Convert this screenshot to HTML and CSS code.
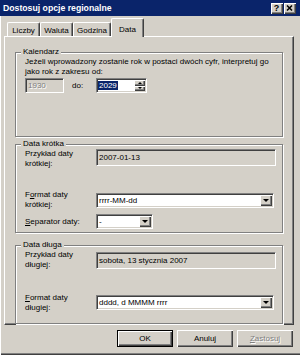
FILE: index.html
```html
<!DOCTYPE html>
<html lang="pl">
<head>
    <meta charset="UTF-8">
    <meta name="viewport" content="width=device-width, initial-scale=1.0">
    <title>Dostosuj opcje regionalne</title>
    <link rel="stylesheet" href="styles.css">
</head>
<body>
    <div class="dialog">
        <div class="titlebar">
            <span class="title">Dostosuj opcje regionalne</span>
            <div class="caption-buttons">
                <span class="cap-btn help">?</span>
                <span class="cap-btn close">
                    <svg width="7" height="6" viewBox="0 0 7 6"><path d="M1 0.5L6 5.5M6 0.5L1 5.5" stroke="#000" stroke-width="1.5"/></svg>
                </span>
            </div>
        </div>

        <div class="tabs">
            <div class="tab">Liczby</div>
            <div class="tab">Waluta</div>
            <div class="tab">Godzina</div>
            <div class="tab active">Data</div>
        </div>

        <div class="panel">
            <fieldset class="group calendar">
                <legend>Kalendarz</legend>
                <p class="hint">Jeżeli wprowadzony zostanie rok w postaci dwóch cyfr, interpretuj go<br>jako rok z zakresu od:</p>
                <div class="range">
                    <span class="edit year disabled">1930</span>
                    <span class="range-label">do:</span>
                    <div class="edit spin">
                        <span class="spin-value"><span class="selected">2029</span></span>
                        <span class="spin-buttons">
                            <span class="spin-btn"><i class="arrow-up"></i></span>
                            <span class="spin-btn"><i class="arrow-down"></i></span>
                        </span>
                    </div>
                </div>
            </fieldset>

            <fieldset class="group short-date">
                <legend>Data krótka</legend>
                <div class="row sample-row">
                    <span class="row-label">Przykład daty<br>krótkiej:</span>
                    <span class="edit sample">2007-01-13</span>
                </div>
                <div class="row format-row">
                    <span class="row-label">F<u>o</u>rmat daty<br>krótkiej:</span>
                    <div class="edit combo">
                        <span class="combo-value">rrrr-MM-dd</span>
                        <span class="combo-btn"><i class="arrow-down"></i></span>
                    </div>
                </div>
                <div class="row separator-row">
                    <span class="row-label"><u>S</u>eparator daty:</span>
                    <div class="edit combo small">
                        <span class="combo-value">-</span>
                        <span class="combo-btn"><i class="arrow-down"></i></span>
                    </div>
                </div>
            </fieldset>

            <fieldset class="group long-date">
                <legend>Data długa</legend>
                <div class="row sample-row">
                    <span class="row-label">Przykład daty<br>długiej:</span>
                    <span class="edit sample">sobota, 13 stycznia 2007</span>
                </div>
                <div class="row format-row">
                    <span class="row-label"><u>F</u>ormat daty<br>długiej:</span>
                    <div class="edit combo">
                        <span class="combo-value">dddd, d MMMM rrrr</span>
                        <span class="combo-btn"><i class="arrow-down"></i></span>
                    </div>
                </div>
            </fieldset>
        </div>

        <div class="buttons">
            <button type="button" class="default">OK</button>
            <button type="button">Anuluj</button>
            <button type="button" disabled><u>Z</u>astosuj</button>
        </div>
    </div>
</body>
</html>
```

FILE: styles.css
```css
* {
    box-sizing: border-box;
}

body {
    margin: 0;
    font-family: "Liberation Sans", Arial, sans-serif;
    font-size: 8px;
    line-height: 10px;
    color: #000;
    background: #d4d0c8;
}

.dialog {
    width: 300px;
    height: 355px;
    background: #d4d0c8;
    box-shadow: inset 1px 0 #fff, inset 0 -1px #404040, inset 0 -2px #808080;
    overflow: hidden;
}

/* title bar */
.titlebar {
    height: 16px;
    background: #0a246a;
    display: flex;
    align-items: center;
    justify-content: space-between;
    padding: 0 4px 0 3px;
}

.title {
    color: #fff;
    font-weight: bold;
    font-size: 8.7px;
}

.caption-buttons {
    display: flex;
    gap: 1px;
}

.cap-btn {
    width: 12px;
    height: 11px;
    background: #d4d0c8;
    box-shadow: inset 1px 1px #fff, inset -1px -1px #404040, inset -2px -2px #808080;
    display: flex;
    align-items: center;
    justify-content: center;
    font-weight: bold;
    font-size: 9px;
    line-height: 1;
    padding-right: 1px;
}

/* tabs */
.tabs {
    display: flex;
    align-items: flex-end;
    height: 19px;
    margin-top: 2px;
    padding-left: 7px;
    position: relative;
    z-index: 1;
}

.tab {
    width: 33px;
    height: 14px;
    margin-bottom: 1px;
    padding-top: 3px;
    text-align: center;
    border-top: 1px solid #fff;
    border-left: 1px solid #fff;
    border-right: 1px solid #404040;
    box-shadow: inset -1px 0 #808080;
    border-radius: 2px 2px 0 0;
    background: #d4d0c8;
}

.tab:nth-child(3) {
    width: 38px;
}

.tab.active {
    height: 19px;
    margin-bottom: 0;
    padding-top: 6px;
}

.panel {
    margin: -1px 0 0 4px;
    width: 290px;
    height: 289px;
    padding: 0 10px;
    border-top: 1px solid #fff;
    border-left: 1px solid #fff;
    border-right: 1px solid #404040;
    border-bottom: 1px solid #404040;
    box-shadow: inset -1px -1px #808080;
}

/* group boxes */
.group {
    margin: 0;
    padding: 0 0 0 9px;
    border: 1px solid #808080;
    box-shadow: inset 1px 1px #fff, 1px 1px #fff;
}

.group legend {
    margin-left: -4px;
    padding: 0 2px;
    background: #d4d0c8;
}

.calendar {
    margin-top: 10px;
    padding-bottom: 43px;
}

.short-date {
    margin-top: 2px;
    padding-bottom: 3px;
}

.long-date {
    margin-top: 7px;
    padding-bottom: 10px;
}

.hint {
    margin: 0;
}

/* sunken edit fields */
.edit {
    display: flex;
    align-items: center;
    height: 15px;
    padding: 0 2px;
    background: #fff;
    border: 1px solid;
    border-color: #808080 #fff #fff #808080;
    box-shadow: inset 1px 1px #404040, inset -1px -1px #d4d0c8;
    white-space: nowrap;
}

.range {
    display: flex;
    align-items: center;
    margin-top: 1px;
}

.year {
    width: 39px;
}

.disabled {
    background: #d4d0c8;
    color: #808080;
    text-shadow: 1px 1px #fff;
}

.range-label {
    width: 24px;
    margin-left: 8px;
}

.spin {
    width: 51px;
    padding: 0 0 0 1px;
}

.spin-value {
    flex: 1;
}

.selected {
    background: #0a246a;
    color: #fff;
    padding: 0 1px;
}

.spin-buttons {
    display: flex;
    flex-direction: column;
    width: 11px;
    height: 11px;
    margin-right: 1px;
}

.spin-btn,
.combo-btn {
    flex: 1;
    display: flex;
    align-items: center;
    justify-content: center;
    background: #d4d0c8;
    box-shadow: inset 1px 1px #fff, inset -1px -1px #404040, inset -2px -2px #808080;
}

.arrow-up,
.arrow-down {
    width: 0;
    height: 0;
    border-left: 2px solid transparent;
    border-right: 2px solid transparent;
}

.arrow-up {
    border-bottom: 2px solid #000;
}

.arrow-down {
    border-top: 2px solid #000;
}

.combo-btn .arrow-down {
    border-left-width: 3px;
    border-right-width: 3px;
    border-top-width: 3px;
}

/* label + field rows */
.row {
    display: grid;
    grid-template-columns: 71px auto;
    align-items: start;
}

.sample {
    width: 180px;
    height: 17px;
    background: #d4d0c8;
    padding-left: 2px;
}

.combo {
    width: 178px;
    padding: 0 1px 0 2px;
    margin-top: 3px;
}

.combo.small {
    width: 57px;
    margin-top: 0;
}

.combo-value {
    flex: 1;
}

.combo-btn {
    flex: none;
    width: 12px;
    height: 11px;
}

.short-date .format-row {
    margin-top: 21px;
}

.separator-row {
    margin-top: 4px;
    align-items: center;
}

.long-date .sample {
    margin-top: 2px;
}

.long-date .format-row {
    margin-top: 23px;
}

.long-date .combo {
    margin-top: 2px;
}

/* dialog buttons */
.buttons {
    display: flex;
    justify-content: flex-end;
    gap: 4px;
    margin-top: 5px;
    padding-right: 7px;
}

.buttons button {
    width: 56px;
    height: 17px;
    padding: 0;
    font-family: inherit;
    font-size: 8px;
    color: #000;
    background: #d4d0c8;
    border: none;
    box-shadow: inset 1px 1px #fff, inset -1px -1px #404040, inset -2px -2px #808080;
}

.buttons button.default {
    border: 1px solid #000;
}

.buttons button:disabled {
    color: #808080;
    text-shadow: 1px 1px #fff;
}
```
